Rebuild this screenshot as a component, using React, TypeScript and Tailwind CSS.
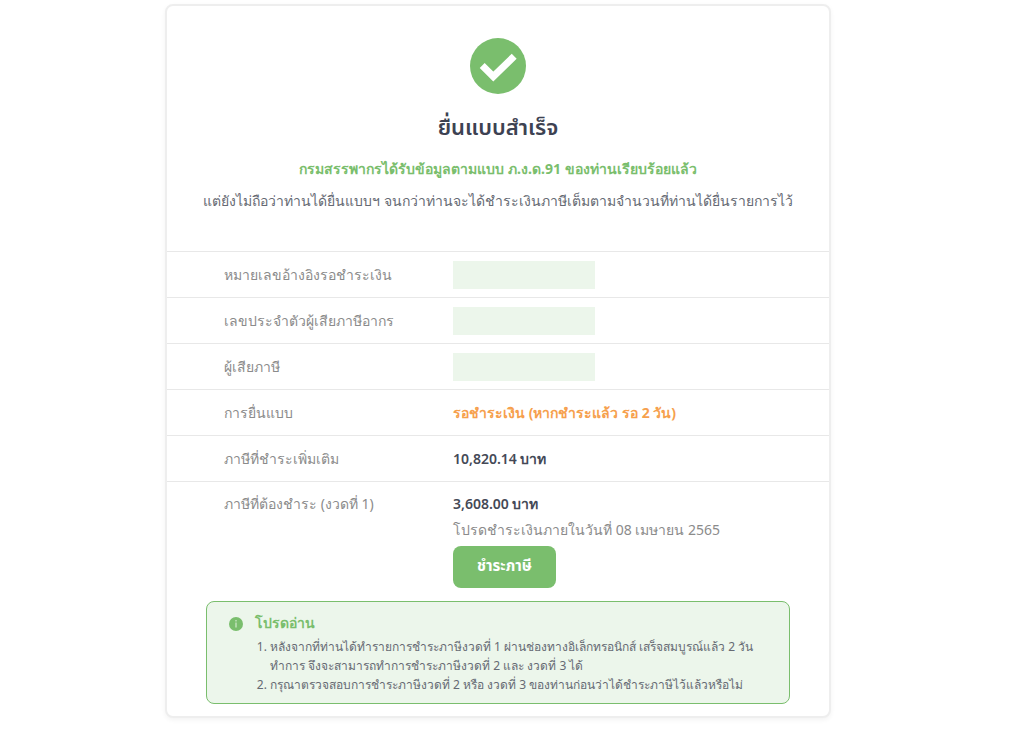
import React from "react";

type Row = { label: string; value: React.ReactNode };

const placeholder = <div className="h-7 w-[142px] bg-[#ecf6eb]" />;

const rows: Row[] = [
  { label: "หมายเลขอ้างอิงรอชำระเงิน", value: placeholder },
  { label: "เลขประจำตัวผู้เสียภาษีอากร", value: placeholder },
  { label: "ผู้เสียภาษี", value: placeholder },
  {
    label: "การยื่นแบบ",
    value: <p className="font-bold text-[#f6a04d]">รอชำระเงิน (หากชำระแล้ว รอ 2 วัน)</p>,
  },
  {
    label: "ภาษีที่ชำระเพิ่มเติม",
    value: <p className="font-semibold text-[#444956]">10,820.14 บาท</p>,
  },
];

export default function App() {
  return (
    <main className="bg-white pt-1 pr-7 pb-5 font-['Noto_Sans',sans-serif] text-[14px] leading-7">
      <section className="mx-auto max-w-[666px] rounded-lg border-2 border-[#eeeeee] bg-white pb-3 shadow-[0_2px_5px_rgba(0,0,0,0.05)]">
        <header className="flex flex-col items-center px-6 pt-8 pb-[34px] text-center">
          <svg viewBox="0 0 56 56" className="size-14" aria-hidden="true">
            <circle cx="28" cy="28" r="28" fill="#7abe6d" />
            <path d="M12.2 27.6 L23.3 38.6 L44.2 18.2" fill="none" stroke="#fff" strokeWidth="7" />
          </svg>
          <h1 className="mt-[17px] font-['Noto_Sans_Thai','Noto_Sans',sans-serif] text-[22px] leading-9 font-semibold text-[#3d4252]">
            ยื่นแบบสำเร็จ
          </h1>
          <p className="mt-1.5 leading-8 font-bold text-[#7abe6d]">
            กรมสรรพากรได้รับข้อมูลตามแบบ ภ.ง.ด.91 ของท่านเรียบร้อยแล้ว
          </p>
          <p className="leading-8 text-[#666a73]">
            แต่ยังไม่ถือว่าท่านได้ยื่นแบบฯ จนกว่าท่านจะได้ชำระเงินภาษีเต็มตามจำนวนที่ท่านได้ยื่นรายการไว้
          </p>
        </header>

        <dl>
          {rows.map((row) => (
            <div
              key={row.label}
              className="grid min-h-[46px] grid-cols-[229px_1fr] items-center border-t border-[#e8e8e8] pl-[57px]"
            >
              <dt className="text-[#8b8b8b]">{row.label}</dt>
              <dd>{row.value}</dd>
            </div>
          ))}
          <div className="grid grid-cols-[229px_1fr] border-t border-[#e8e8e8] pt-2 pl-[57px]">
            <dt className="text-[#8b8b8b]">ภาษีที่ต้องชำระ (งวดที่ 1)</dt>
            <dd>
              <p className="font-semibold text-[#444956]">3,608.00 บาท</p>
              <p className="leading-6 text-[#8b8b8b]">โปรดชำระเงินภายในวันที่ 08 เมษายน 2565</p>
              <button
                type="button"
                className="mt-1 h-[42px] rounded-lg bg-[#7abe6d] px-6 font-['Noto_Sans_Thai','Noto_Sans',sans-serif] text-[15px] font-bold text-white"
              >
                ชำระภาษี
              </button>
            </dd>
          </div>
        </dl>

        <aside className="mx-[39px] mt-[13px] flex gap-3 rounded-lg border border-[#7abe6d] bg-[#ecf6eb] pt-[7px] pr-5 pb-[9px] pl-[22px]">
          <svg viewBox="0 0 14 14" className="mt-2 size-[14px] shrink-0" aria-hidden="true">
            <circle cx="7" cy="7" r="7" fill="#7abe6d" />
            <path d="M7 3v1.4M7 5.6v5" stroke="#c5e3bf" strokeWidth="1.4" />
          </svg>
          <div>
            <h2 className="font-semibold text-[#7abe6d]">โปรดอ่าน</h2>
            <ol className="list-decimal pl-[15px] text-xs leading-[19px] text-[#666a73]">
              <li>
                หลังจากที่ท่านได้ทำรายการชำระภาษีงวดที่ 1 ผ่านช่องทางอิเล็กทรอนิกส์ เสร็จสมบูรณ์แล้ว 2 วัน{" "}
                <span className="inline-block">ทำการ จึงจะสามารถทำการชำระภาษีงวดที่ 2 และ งวดที่ 3 ได้</span>
              </li>
              <li>กรุณาตรวจสอบการชำระภาษีงวดที่ 2 หรือ งวดที่ 3 ของท่านก่อนว่าได้ชำระภาษีไว้แล้วหรือไม่</li>
            </ol>
          </div>
        </aside>
      </section>
    </main>
  );
}
